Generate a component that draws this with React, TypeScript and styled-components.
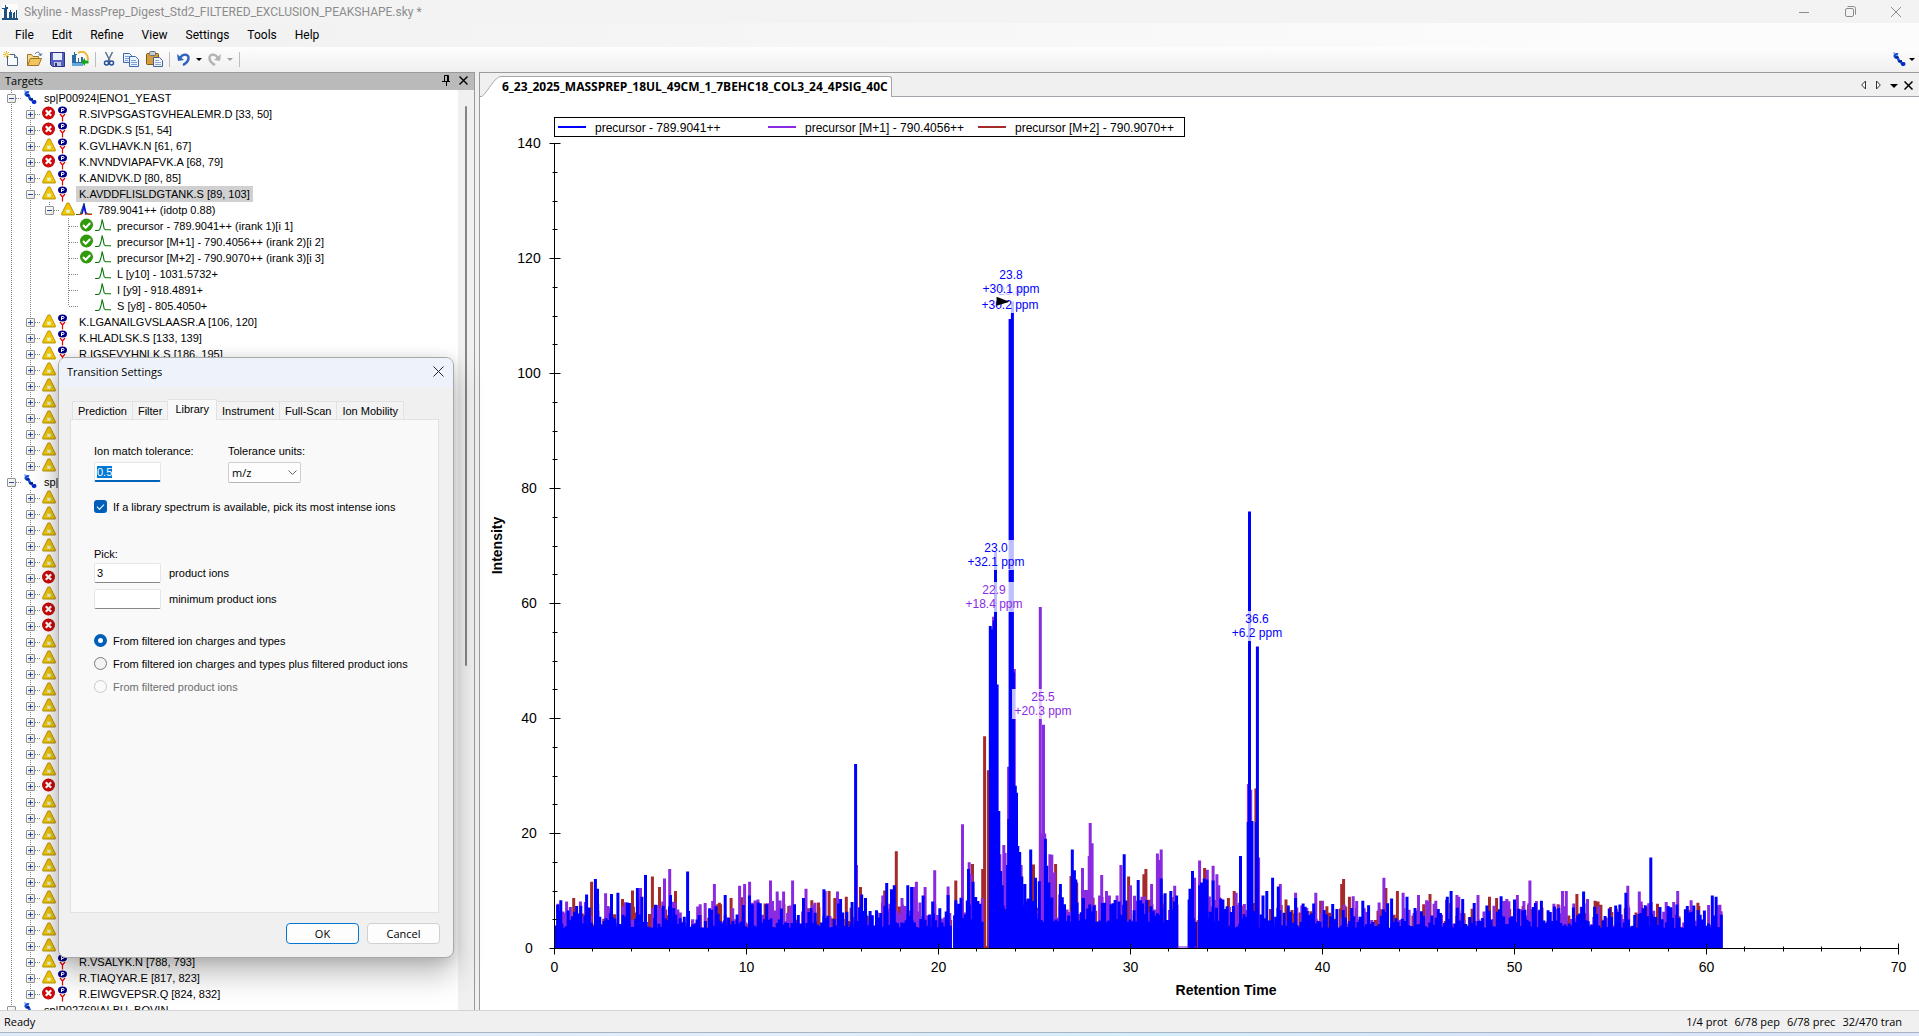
import React, { useEffect, useLayoutEffect, useMemo, useRef, useState } from "react";
import styled, { createGlobalStyle, css } from "styled-components";

const UI = `"Open Sans", "Noto Sans", sans-serif`;
const COMPACT = `Roboto, "Liberation Sans", sans-serif`;
const SANS = `"Liberation Sans", Arial, sans-serif`;

const Global = createGlobalStyle`
  html, body { margin: 0; padding: 0; }
  body { font-family: ${SANS}; font-size: 11px; color: #000; background: #f0f0f0; overflow: hidden; }
  *, *::before, *::after { box-sizing: border-box; }
  button, input, select { font: inherit; color: inherit; }
`;

/* ---------- window frame ---------- */

const Window = styled.div`
  display: flex;
  flex-direction: column;
  height: 100vh;
`;

const TitleBar = styled.header`
  display: flex;
  align-items: center;
  height: 23px;
  padding-left: 2px;
  background: #f3f3f3;
  color: #8c8c8c;
  font-family: ${COMPACT};
  font-size: 12px;
`;

const TitleText = styled.span`
  flex: 1;
  padding-left: 6px;
`;

const CaptionButton = styled.button`
  width: 46px;
  height: 20px;
  padding: 0;
  border: 0;
  background: none;
  display: grid;
  place-items: center;
`;

const MenuBar = styled.nav`
  display: flex;
  height: 24px;
  padding-left: 6px;
  background: linear-gradient(to right, #f0f0f0, #fcfcfc 85%);
  font-family: ${COMPACT};
  font-size: 12px;
`;

const MenuItem = styled.button`
  padding: 0 9px;
  border: 0;
  background: none;
`;

const ToolBar = styled.div`
  display: flex;
  align-items: center;
  height: 25px;
  padding: 0 3px 1px 0;
  background: linear-gradient(#fdfdfd, #f0f0f0);
`;

const ToolButton = styled.button<{ $w?: number }>`
  display: grid;
  place-items: center;
  width: ${(p) => p.$w ?? 23}px;
  height: 22px;
  padding: 0;
  border: 0;
  background: none;
`;

const ToolDivider = styled.span`
  width: 1px;
  height: 15px;
  margin: 0 3px;
  background: #bdbdbd;
`;

const Spacer = styled.span`
  flex: 1;
`;

const Main = styled.main`
  display: flex;
  flex: 1;
  min-height: 0;
  gap: 4px;
`;

const StatusBar = styled.footer`
  display: flex;
  justify-content: space-between;
  align-items: center;
  height: 22px;
  padding: 0 17px 0 4px;
  border-top: 1px solid #d4d4d4;
  background: #f0f0f0;
  font-family: ${UI};
  font-size: 11px;
`;

const StatusCounts = styled.div`
  display: flex;
  gap: 7px;
`;

const DesktopEdge = styled.div`
  height: 4px;
  border-top: 1px solid #a6b4c4;
  background: linear-gradient(to right, #dfeaf8, #e3ecfa 40%, #d2eefa 60%, #d8e2fb 80%, #dfe6fa);
`;

/* ---------- targets panel ---------- */

const TargetsPanel = styled.section`
  display: flex;
  flex-direction: column;
  flex: 0 0 475px;
  min-width: 0;
  border-top: 1px solid #9a9a9a;
  border-right: 1px solid #9a9a9a;
`;

const PanelHeader = styled.div`
  display: flex;
  align-items: center;
  height: 17px;
  padding: 0 2px 2px 5px;
  background: #bababa;
  font-family: ${UI};
  font-size: 11px;
`;

const HeaderButton = styled.button`
  display: grid;
  place-items: center;
  width: 17px;
  height: 15px;
  padding: 0;
  border: 0;
  background: none;
`;

const PanelBody = styled.div`
  display: flex;
  flex: 1;
  min-height: 0;
  background: #fff;
`;

const Tree = styled.ul`
  flex: 1;
  margin: 0;
  padding: 0 0 0 2px;
  list-style: none;
  overflow: hidden;
`;

const TreeRow = styled.li`
  display: flex;
  align-items: center;
  height: 16px;
  white-space: nowrap;
`;

type GuideKind = "none" | "line" | "branch" | "end";

const dotsDown = "repeating-linear-gradient(to bottom, #808080 0 1px, transparent 1px 2px)";
const dotsAcross = "repeating-linear-gradient(to right, #808080 0 1px, transparent 1px 2px)";

const Guide = styled.span<{ $kind: GuideKind }>`
  display: grid;
  place-items: center;
  flex: 0 0 19px;
  height: 16px;
  ${(p) => p.$kind === "line" && css`background: ${dotsDown} 9px 0 / 1px 100% no-repeat;`}
  ${(p) =>
    p.$kind === "branch" &&
    css`background: ${dotsDown} 9px 0 / 1px 100% no-repeat, ${dotsAcross} 10px 8px / 9px 1px no-repeat;`}
  ${(p) =>
    p.$kind === "end" &&
    css`background: ${dotsDown} 9px 0 / 1px 50% no-repeat, ${dotsAcross} 10px 8px / 9px 1px no-repeat;`}
`;

const Expander = styled.button`
  display: grid;
  place-items: center;
  width: 9px;
  height: 9px;
  padding: 0;
  border: 1px solid #919191;
  border-radius: 1px;
  background: linear-gradient(135deg, #fff, #e4e4e4);
`;

const StateSlot = styled.span`
  flex: 0 0 15px;
  height: 16px;
  margin-left: 2px;
`;

const TypeSlot = styled.span`
  flex: 0 0 17px;
  height: 16px;
`;

const RootSlot = styled.span`
  flex: 0 0 16px;
  height: 16px;
  margin-left: 2px;
`;

const RowLabel = styled.span<{ $selected?: boolean }>`
  height: 16px;
  margin-left: 2px;
  padding: 0 3px;
  line-height: 16px;
  background: ${(p) => (p.$selected ? "#d0d0d0" : "transparent")};
`;

const ScrollTrack = styled.div`
  width: 16px;
  padding: 16px 0 0 7px;
  background: #f0f0f0;
`;

const ScrollThumb = styled.div`
  width: 2px;
  height: 62%;
  border-radius: 1px;
  background: #858585;
`;

/* ---------- chart panel ---------- */

const ChartPanel = styled.section`
  display: flex;
  flex-direction: column;
  flex: 1;
  min-width: 0;
  border-top: 1px solid #9a9a9a;
  border-left: 1px solid #9a9a9a;
`;

const TabStrip = styled.div`
  display: flex;
  align-items: flex-end;
  height: 24px;
  padding: 0 3px 0 2px;
  border-bottom: 1px solid #a5a5ad;
  background: #f0f0f0;
`;

const DocTab = styled.button`
  display: flex;
  height: 21px;
  margin-bottom: -1px;
  padding: 0;
  border: 0;
  background: none;
  font-family: ${UI};
  font-size: 12px;
  font-weight: 700;
`;

const DocTabLabel = styled.span`
  height: 21px;
  padding: 0 3px 0 0;
  line-height: 20px;
  border: solid #a5a5ad;
  border-width: 1px 1px 0 0;
  border-radius: 0 3px 0 0;
  background: #fff;
`;

const StripButton = styled.button`
  display: grid;
  place-items: center;
  width: 15px;
  height: 22px;
  padding: 0;
  border: 0;
  background: none;
`;

const ChartArea = styled.div`
  flex: 1;
  min-height: 0;
  background: #fff;
  overflow: hidden;
`;

const ChartSvg = styled.svg`
  display: block;
  font-family: ${SANS};
`;

/* ---------- dialog ---------- */

const Dialog = styled.form`
  position: absolute;
  left: 58px;
  top: 357px;
  width: 396px;
  height: 601px;
  display: flex;
  flex-direction: column;
  border: 1px solid #a8a8a8;
  border-radius: 8px;
  background: #f0f0f0;
  box-shadow: 0 16px 30px rgba(0, 0, 0, 0.26), 0 2px 14px rgba(0, 0, 0, 0.14);
  overflow: hidden;
`;

const DialogTitle = styled.div`
  display: flex;
  align-items: center;
  justify-content: space-between;
  flex: 0 0 29px;
  padding: 0 2px 2px 8px;
  background: #eef3fb;
  font-family: ${UI};
  font-size: 11px;
`;

const CloseButton = styled.button`
  display: grid;
  place-items: center;
  width: 26px;
  height: 26px;
  padding: 0;
  border: 0;
  background: none;
`;

const Tabs = styled.div`
  display: flex;
  align-items: flex-end;
  padding: 12px 0 0 13px;
`;

const DialogTab = styled.button<{ $active?: boolean }>`
  position: relative;
  height: ${(p) => (p.$active ? 21 : 18)}px;
  margin-bottom: ${(p) => (p.$active ? -1 : 0)}px;
  padding: ${(p) => (p.$active ? "0 7px 3px" : "0 5px")};
  border: solid #e2e2e2;
  border-width: 1px 1px 0 0;
  background: ${(p) => (p.$active ? "#f9f9f9" : "#f3f3f3")};
  white-space: nowrap;
  &:first-child { border-left-width: 1px; }
`;

const TabPage = styled.div`
  flex: 1;
  display: flex;
  flex-direction: column;
  margin: 0 14px 0 11px;
  padding: 23px;
  border: 1px solid #e2e2e2;
  background: #f9f9f9;
`;

const FieldRow = styled.div`
  display: flex;
  gap: 67px;
`;

const Field = styled.div`
  display: flex;
  flex-direction: column;
  gap: 3px;
  width: 67px;
  & > label { height: 16px; line-height: 16px; white-space: nowrap; }
`;

const TextBox = styled.input<{ $active?: boolean }>`
  width: 67px;
  height: 20px;
  padding: 0 2px;
  border: 1px solid #e6e6e6;
  border-bottom: ${(p) => (p.$active ? "2px solid #0063b9" : "1px solid #868686")};
  border-radius: 2px;
  outline: none;
  background: #fff;
  &::selection { background: #0078d7; color: #fff; }
`;

const SelectWrap = styled.div`
  position: relative;
  display: flex;
  width: 73px;
`;

const SelectBox = styled.select`
  appearance: none;
  width: 73px;
  height: 21px;
  padding: 0 3px;
  border: 1px solid #cfcfcf;
  border-bottom-color: #b5b5b5;
  border-radius: 2px;
  background: #fdfdfd;
  font-family: ${UI};
`;

const SelectChevron = styled.svg`
  position: absolute;
  right: 4px;
  top: 8px;
  pointer-events: none;
`;

const Choice = styled.label<{ $disabled?: boolean }>`
  display: flex;
  align-items: center;
  gap: 6px;
  height: 23px;
  color: ${(p) => (p.$disabled ? "#6d6d6d" : "#000")};
  white-space: nowrap;
`;

const CheckBox = styled.input`
  appearance: none;
  width: 13px;
  height: 13px;
  margin: 0;
  border-radius: 3px;
  background: #005fb8;
  display: grid;
  place-items: center;
  &::after {
    content: "";
    width: 7px;
    height: 4px;
    margin-top: -2px;
    border: solid #fff;
    border-width: 0 0 1px 1px;
    rotate: -45deg;
  }
`;

const Radio = styled.input`
  appearance: none;
  width: 13px;
  height: 13px;
  margin: 0;
  border: 1px solid #7a7a7a;
  border-radius: 50%;
  background: #f3f3f3;
  &:checked { border: 4px solid #005fb8; background: #fff; }
  &:disabled { border-color: #cacaca; background: #fafafa; }
`;

const Section = styled.div<{ $top: number }>`
  display: flex;
  flex-direction: column;
  margin-top: ${(p) => p.$top}px;
`;

const CountRow = styled.div`
  display: flex;
  align-items: center;
  gap: 8px;
  height: 26px;
`;

const DialogButtons = styled.div`
  display: flex;
  justify-content: flex-end;
  gap: 8px;
  padding: 10px 13px 13px;
`;

const PushButton = styled.button<{ $primary?: boolean }>`
  width: 73px;
  height: 21px;
  padding: 0;
  border: 1px solid ${(p) => (p.$primary ? "#0078d4" : "#d0d0d0")};
  border-radius: 4px;
  background: #fdfdfd;
  font-family: ${UI};
`;

/* ---------- icons ---------- */

const SkylineLogo = () => (
  <svg width="16" height="16" viewBox="0 0 16 16" fill="#1f5082">
    <rect y="0" width="16" height="16" fill="#fff" opacity=".7" />
    <path d="M3 1h1v2h2v2H5v9H2V5H0V4h3zM7 8h1V6h1v2h1v6H7zM11 9h1V8h1v6h-2zM14 6h1v8h-1zM0 14h16v2H0z" />
  </svg>
);

const NewIcon = () => (
  <svg width="16" height="16" viewBox="0 0 16 16">
    <path d="M4.500 3.500h7l3 3v8h-10z" fill="#f8fbff" stroke="#50627c" />
    <path d="M11.500 3.500v3h3" fill="#cfdcec" stroke="#50627c" />
    <path d="M3.500 0v7M0 3.500h7M1 1l5 5M6 1L1 6" stroke="#e8b820" />
    <rect x="2.500" y="2.500" width="2" height="2" fill="#fff6c0" />
  </svg>
);
const OpenIcon = () => (
  <svg width="17" height="16" viewBox="0 0 17 16">
    <path d="M1.500 14V3.500h4l1.500 2h5.500V8" fill="#f6d98a" stroke="#9b762a" />
    <path d="M1.500 14.500L4.500 7.500h11l-3 7z" fill="#f3c35c" stroke="#9b762a" />
    <path d="M9 3c2-3 5-2 5.500 1M12.500 3l2 2 1.500-2.500" fill="none" stroke="#4b6e96" />
  </svg>
);
const SaveIcon = () => (
  <svg width="15" height="15" viewBox="0 0 15 15">
    <path d="M.5.500h14v14h-12l-2-2z" fill="#5560c0" stroke="#2c3488" />
    <rect x="3" y="1" width="9" height="7" fill="#e9effa" />
    <rect x="4" y="10" width="7" height="4" fill="#bcc3dc" />
    <rect x="5" y="11" width="2" height="3" fill="#2c3488" />
  </svg>
);
const PublishIcon = () => (
  <svg width="17" height="16" viewBox="0 0 17 16">
    <path d="M6 2c5-3 10 0 10 7" fill="none" stroke="#f1b52e" strokeWidth="2" />
    <path d="M2 1h1v2h2v1H4v7h2V7h1v4h2V6h2v7H0V4h2z" fill="#2c6aa5" />
    <path d="M0 12h11v3H0z" fill="#64a7da" />
    <path d="M9 11l4-4v2.500h3.500v3H13V15z" fill="#16a316" />
  </svg>
);
const CutIcon = () => (
  <svg width="12" height="16" viewBox="0 0 12 16" fill="none">
    <path d="M2.500 1l4.500 9M9.500 1L5 10" stroke="#5a6f8c" strokeWidth="1.500" />
    <circle cx="3.500" cy="12" r="2" stroke="#274f9c" strokeWidth="1.500" />
    <circle cx="8.500" cy="12" r="2" stroke="#274f9c" strokeWidth="1.500" />
  </svg>
);
const CopyIcon = () => (
  <svg width="16" height="15" viewBox="0 0 16 15" stroke="#3e66a8">
    <path d="M.5 1.500h6l2 2v7h-8z" fill="#eaf2fd" />
    <path d="M2 4.500h4M2 6.500h5M2 8.500h3" stroke="#7ba0d6" />
    <path d="M6.500 4.500h6l3 3v7h-9z" fill="#eaf2fd" />
    <path d="M8 8.500h5M8 10.500h6M8 12.500h6" stroke="#7ba0d6" />
  </svg>
);
const PasteIcon = () => (
  <svg width="17" height="16" viewBox="0 0 17 16">
    <rect x=".5" y="2.500" width="12" height="11" rx="1" fill="#d69b3a" stroke="#7e5817" />
    <rect x="3.500" y=".5" width="6" height="4" rx="1" fill="#c8ccd4" stroke="#6b6f78" />
    <path d="M7.500 6.500h6l3 3v6h-9z" fill="#eef3fb" stroke="#44638e" />
    <path d="M9 9.500h4M9 11.500h6M9 13.500h6" stroke="#8eabd2" />
  </svg>
);
const UndoIcon = () => (
  <svg width="13" height="14" viewBox="0 0 13 14" fill="none">
    <path d="M3 6c3-5 9-4 8.500.500C11.200 9.500 9 11.500 6 13" stroke="#2f64bd" strokeWidth="2.400" />
    <path d="M0 2l1 7 6-1z" fill="#2f64bd" />
  </svg>
);
const RedoIcon = () => (
  <svg width="13" height="14" viewBox="0 0 13 14" fill="none">
    <path d="M10 6C7 1 1 2 1.500 6.500 1.800 9.500 4 11.500 7 13" stroke="#b4b4b4" strokeWidth="2.400" />
    <path d="M13 2l-1 7-6-1z" fill="#b4b4b4" />
  </svg>
);
const Caret = ({ color = "#000" }: { color?: string }) => (
  <svg width="6" height="3" viewBox="0 0 6 3"><path d="M0 0h6L3 3z" fill={color} /></svg>
);

const ProteinIcon = () => (
  <svg width="14" height="15" viewBox="0 0 14 15" fill="none">
    <path d="M1 1h2" stroke="#5c86e8" />
    <path d="M6 2.500C2.500 1.500 1.500 5 4.500 5.500S5.500 9 8 9.500 9 13 11.500 13" stroke="#1450e0" strokeWidth="2.600" />
    <path d="M3.500 5.500l3-.500M6.500 9.500l3.500-.500M9.500 12.500l3-1.500" stroke="#001a80" strokeWidth="2" />
    <circle cx="11.500" cy="12" r="2" fill="#0a28d0" />
  </svg>
);
const PeptideIcon = () => (
  <svg width="12" height="16" viewBox="0 0 12 16">
    <ellipse cx="5.500" cy="4" rx="4.500" ry="3.500" fill="#00008b" />
    <path d="M4.500 6V2.500h1.500a1 1 0 010 2H4.500" fill="none" stroke="#fff" />
    <path d="M3 8l2.500 3L8 8M5.500 11v4.500" fill="none" stroke="#e60000" strokeWidth="1.200" />
  </svg>
);
const ErrorIcon = () => (
  <svg width="14" height="14" viewBox="0 0 14 14">
    <circle cx="6.500" cy="7" r="6.500" fill="#cc0a0a" />
    <path d="M3.800 4.300l5.400 5.400M9.200 4.300L3.800 9.700" stroke="#fff" strokeWidth="2.200" />
  </svg>
);
const WarnIcon = () => (
  <svg width="14" height="14" viewBox="0 0 14 14">
    <path d="M6 1h2l5.300 10.500v1.500H.7v-1.500z" fill="#f5c400" stroke="#b08c00" strokeWidth=".9" strokeLinejoin="round" />
    <rect x="5" y="7.500" width="4" height="3.500" fill="#eaf6cf" stroke="#d8d23c" strokeWidth=".6" />
  </svg>
);
const OkIcon = () => (
  <svg width="14" height="14" viewBox="0 0 14 14">
    <circle cx="6.500" cy="7" r="6.500" fill="#2f9a0a" />
    <path d="M3 7l2.700 2.700L10.200 5" fill="none" stroke="#fff" strokeWidth="2" />
  </svg>
);
const TransitionIcon = () => (
  <svg width="16" height="14" viewBox="0 0 16 14" fill="none" stroke="#077a07">
    <path d="M0 12.500h3.500c1.500 0 1.800-3 2.500-5 .6-2 1-3 1-6 .8 3 1.500 4 1.700 7 .2 2.500.6 3 1.800 3.200h5.500" strokeWidth="1.100" />
  </svg>
);
const PrecursorIcon = () => (
  <svg width="16" height="14" viewBox="0 0 16 14" fill="none">
    <path d="M0 12.500h4l4-11M8 1l1.500 11h6.500" stroke="#077a07" />
    <path d="M2 12.500h3l2-1.500M9 12.500l2-1 2 1h3" stroke="#e02a10" strokeWidth="1.200" />
    <path d="M5.500 11.500c1.500-1 1.500-5 2.500-8 1 3 1 7 2.500 8" stroke="#0a0af0" strokeWidth="1.600" />
  </svg>
);

/* ---------- tree data ---------- */

type State = "error" | "warn" | "ok" | "blank";
interface Node {
  level: 0 | 1 | 2 | 3;
  label: string;
  state?: State;
  open?: boolean;
  last?: boolean;
  selected?: boolean;
}

const pep = (state: State, label = "", extra: Partial<Node> = {}): Node => ({ level: 1, state, label, ...extra });
const tran = (state: State, label: string, last = false): Node => ({ level: 3, state, label, last });
const run = (codes: string): Node[] => codes.split("").map((c) => pep(c === "x" ? "error" : "warn"));

const nodes: Node[] = [
  { level: 0, label: "sp|P00924|ENO1_YEAST", open: true },
  pep("error", "R.SIVPSGASTGVHEALEMR.D [33, 50]"),
  pep("error", "R.DGDK.S [51, 54]"),
  pep("warn", "K.GVLHAVK.N [61, 67]"),
  pep("error", "K.NVNDVIAPAFVK.A [68, 79]"),
  pep("warn", "K.ANIDVK.D [80, 85]"),
  pep("warn", "K.AVDDFLISLDGTANK.S [89, 103]", { open: true, selected: true }),
  { level: 2, state: "warn", label: "789.9041++ (idotp 0.88)", open: true, last: true },
  tran("ok", "precursor - 789.9041++ (irank 1)[i 1]"),
  tran("ok", "precursor [M+1] - 790.4056++ (irank 2)[i 2]"),
  tran("ok", "precursor [M+2] - 790.9070++ (irank 3)[i 3]"),
  tran("blank", "L [y10] - 1031.5732+"),
  tran("blank", "I [y9] - 918.4891+"),
  tran("blank", "S [y8] - 805.4050+", true),
  pep("warn", "K.LGANAILGVSLAASR.A [106, 120]"),
  pep("warn", "K.HLADLSK.S [133, 139]"),
  pep("warn", "R.IGSEVYHNLK.S [186, 195]"),
  ...run("wwwwww"),
  pep("warn", "", { last: true }),
  { level: 0, label: "sp|", open: true },
  ...run("wwwwwxwxxwwwwwwwwwxwwwwwwwwww"),
  pep("warn", "R.VSALYK.N [788, 793]"),
  pep("warn", "R.TIAQYAR.E [817, 823]"),
  pep("error", "R.EIWGVEPSR.Q [824, 832]", { last: true }),
  { level: 0, label: "sp|P02769|ALBU_BOVIN", open: true },
];

const stateIcons: Record<State, React.ReactNode> = {
  error: <ErrorIcon />,
  warn: <WarnIcon />,
  ok: <OkIcon />,
  blank: null,
};

function guidesFor(n: Node): GuideKind[] {
  const own: GuideKind = n.last ? "end" : "branch";
  if (n.level === 0) return ["branch"];
  if (n.level === 1) return ["line", own];
  if (n.level === 2) return ["line", "line", own];
  return ["line", "line", "none", own];
}

function TreeItem({ node }: { node: Node }) {
  const guides = guidesFor(node);
  const expandable = node.level < 3;
  return (
    <TreeRow>
      {guides.map((g, i) => (
        <Guide key={i} $kind={g}>
          {i === guides.length - 1 && expandable && (
            <Expander type="button" aria-label={node.open ? "Collapse" : "Expand"}>
              <svg width="7" height="7" viewBox="0 0 7 7" stroke="#2b4a9b">
                <path d={node.open ? "M1 3.500h5" : "M1 3.500h5M3.500 1v5"} />
              </svg>
            </Expander>
          )}
        </Guide>
      ))}
      {node.level === 0 ? (
        <RootSlot><ProteinIcon /></RootSlot>
      ) : (
        <>
          <StateSlot>{stateIcons[node.state ?? "blank"]}</StateSlot>
          <TypeSlot>
            {node.level === 1 ? <PeptideIcon /> : node.level === 2 ? <PrecursorIcon /> : <TransitionIcon />}
          </TypeSlot>
        </>
      )}
      <RowLabel $selected={node.selected}>{node.label}</RowLabel>
    </TreeRow>
  );
}

/* ---------- chromatogram ---------- */

type Peak = [number, number];

const bluePeaks: Peak[] = [
  [0.16, 7.6], [0.33, 8.4], [1.67, 9.4], [2.13, 12.1], [2.24, 10.4], [2.97, 9.5], [3.3, 9.7], [4.32, 10.5], [4.55, 9],
  [4.74, 12.8], [5.26, 7.6], [6.04, 9.3], [6.93, 13.4], [8.89, 9.3], [10.15, 9.2], [10.3, 7.7], [12.5, 7.7], [12.97, 8.8],
  [14.03, 10.3], [14.9, 8.6], [15.5, 8.1], [15.68, 32.1], [16, 9.4], [16.2, 8.8], [17.3, 11.4], [17.55, 10.3], [17.7, 11],
  [18.4, 11], [18.6, 10.7], [19.2, 9.2], [19.7, 8.2], [20.5, 9.3], [20.9, 8.4], [21.56, 13.8], [21.8, 11.6],
  [22.7, 56.1], [22.76, 34], [22.83, 55.5], [22.9, 57], [22.97, 69], [23.05, 45.9], [23.14, 23.9], [23.24, 13.5], [23.32, 11],
  [23.6, 14.5], [23.66, 22.5], [23.73, 109.5], [23.79, 109.5], [23.85, 112.5], [23.9, 48], [24, 28.3], [24.06, 27.1],
  [24.13, 17.8], [24.23, 16.8], [24.34, 12.5], [24.5, 11.2], [24.8, 17.2], [25.05, 12.3], [25.25, 11.7], [25.57, 19.1],
  [25.64, 14.4], [25.75, 11.5], [26.35, 11.2], [26.97, 17.2], [27.08, 13.6], [27.15, 12], [27.53, 8.8], [29.4, 8.2],
  [29.67, 16.4], [30.4, 11.9], [31.6, 12.2], [31.8, 9.6], [32.1, 10], [32.4, 9.2], [33.1, 10.4], [33.23, 13.5], [33.6, 11],
  [33.7, 11.5], [33.84, 12.2], [33.98, 12], [34.3, 11.8], [34.7, 8.7], [35.73, 16.1], [36.13, 22], [36.2, 76], [36.33, 22.2],
  [36.55, 22], [36.61, 52.5], [36.9, 9.2], [37.1, 10], [37.4, 12.3], [37.7, 10.8], [38.6, 8.8], [39, 7.2], [42.1, 8.3],
  [43.6, 8.7], [44.4, 9], [46.5, 9], [46.7, 10], [47.3, 8.6], [49.3, 9.1], [50, 8.5], [51.4, 8.3], [53.6, 9.9], [55.8, 9.7],
  [57.1, 15.8], [58, 7.4], [59, 7.4], [60.3, 9.2], [60.5, 9],
];

const purplePeaks: Peak[] = [
  [0.63, 8.2], [2.66, 9.6], [4.48, 10.5], [5.73, 12.2], [6, 13.8], [8.33, 11.2], [9.64, 10.9], [9.9, 11.2], [10.16, 11.6],
  [10.6, 8.5], [11.25, 11.8], [11.6, 9.9], [11.93, 9.9], [12.4, 11.8], [13.1, 10.4], [14.1, 10], [14.74, 9.9], [15.73, 14.5],
  [17.1, 9.2], [18.1, 8.8], [18.75, 10.7], [18.85, 11.6], [19.3, 10.7], [19.8, 13.6], [20.5, 10.8], [21.25, 21.6],
  [21.6, 15], [21.7, 13], [22.87, 57.7], [23.2, 16.4], [23.4, 18], [23.47, 16.6], [23.65, 31.6], [23.95, 48.6], [24.3, 14.5],
  [25.3, 59.4], [25.36, 20], [25.42, 20], [25.47, 38.9], [25.53, 20], [25.8, 16.4], [25.9, 16.3], [26.03, 13.2], [27.5, 14],
  [27.6, 10.2], [27.72, 10.2], [27.85, 16.1], [27.9, 21.8], [28, 18.3], [28.5, 12.8], [28.75, 10], [28.9, 9.2], [29.5, 14.5],
  [30, 11], [31.1, 11.2], [31.4, 16.5], [31.5, 15.4], [31.6, 17.2], [32.3, 10.9], [33.34, 12.3], [33.6, 15.3], [34, 13.7],
  [34.3, 14.4], [34.5, 12.9], [34.6, 11], [35.5, 9.7], [36.14, 28.6], [36.26, 27.6], [36.67, 15.8], [37.8, 11.2],
  [38.6, 9.7], [39.65, 9.7], [40, 8.3], [41.6, 9.1], [43.2, 12.3], [44.2, 9.7], [45, 9.3], [45.9, 8.3], [47, 9.3], [47.1, 9],
  [48.1, 9.3], [49.6, 8.6], [50.15, 9.3], [50.8, 11.8], [52.5, 10], [52.7, 10], [53.8, 8.6], [55.9, 10.9], [56.5, 9.9],
  [57.9, 8.1], [58.5, 10], [60.7, 7.6],
];

const brownPeaks: Peak[] = [
  [1, 8.8], [1.93, 11.6], [3.54, 8.6], [4.06, 10.1], [5.1, 12.5], [5.47, 10.7], [6.3, 10], [8.5, 7.7], [8.65, 7.7],
  [9.2, 8.8], [9.74, 8.9], [12.2, 7.4], [13.4, 8.4], [13.75, 8], [14.3, 10], [14.6, 8.8], [15.2, 9], [15.94, 10.7],
  [17.2, 10.1], [17.8, 16.9], [20.9, 11.8], [21.77, 14.7], [22.3, 13.8], [22.4, 36.9], [22.6, 31], [24.95, 14.6],
  [26.1, 14.7], [26.9, 12.6], [27.2, 11.5], [29.9, 12.5], [30.7, 12.9], [30.8, 13.8], [33.86, 14], [35.1, 8.8],
  [35.4, 10], [36.53, 27.8], [38.1, 8.5], [39.9, 8.3], [41, 11.2], [41.1, 12.1], [41.4, 9], [43.3, 10.5], [43.9, 10],
  [45.6, 9.5], [48.7, 9], [49.07, 8.8], [53.25, 9.5], [54.2, 8.3], [54.35, 8.2], [54.5, 7.6], [55, 7.2], [59.6, 7.4],
];

const gaps: Peak[] = [[20.7, 20.83], [22.34, 22.66], [32.47, 33.03], [33.38, 33.5]];

function withNoise(peaks: Peak[], seed: number, low: number, spread: number, step: number): Peak[] {
  let s = seed;
  const rand = () => {
    s = (s * 1664525 + 1013904223) % 4294967296;
    return s / 4294967296;
  };
  const out: Peak[] = [...peaks];
  for (let t = 0.05; t < 60.8; t += step) {
    const lift = t > 20.9 && t < 35 ? 1 : 0;
    const h = low + lift + spread * Math.pow(rand(), 1.8);
    if (!gaps.some(([a, b]) => t > a && t < b)) out.push([t, h]);
  }
  return out;
}

interface PeakTag {
  rt: number;
  at: number;
  time: string;
  error: string;
  color: string;
}

const BLUE = "#0000ff";
const PURPLE = "#8a2be2";
const BROWN = "#a52a2a";

const tags: PeakTag[] = [
  { rt: 23.7, at: 113.2, time: "23.8", error: "+30.2 ppm", color: BLUE },
  { rt: 23.8, at: 115.9, time: "23.8", error: "+30.1 ppm", color: BLUE },
  { rt: 22.9, at: 61.2, time: "22.9", error: "+18.4 ppm", color: PURPLE },
  { rt: 22.97, at: 68.4, time: "23.0", error: "+32.1 ppm", color: BLUE },
  { rt: 25.42, at: 42.6, time: "25.5", error: "+20.3 ppm", color: PURPLE },
  { rt: 36.6, at: 56.1, time: "36.6", error: "+6.2 ppm", color: BLUE },
];

const legend = [
  { name: "precursor - 789.9041++", color: BLUE },
  { name: "precursor [M+1] - 790.4056++", color: PURPLE },
  { name: "precursor [M+2] - 790.9070++", color: BROWN },
];

function Chromatogram() {
  const host = useRef<HTMLDivElement>(null);
  const [size, setSize] = useState({ w: 1439, h: 913 });

  useLayoutEffect(() => {
    const el = host.current;
    if (!el) return;
    const measure = () => setSize({ w: el.clientWidth, h: el.clientHeight });
    measure();
    const ro = new ResizeObserver(measure);
    ro.observe(el);
    return () => ro.disconnect();
  }, []);

  const series = useMemo(
    () => [
      { color: BROWN, points: withNoise(brownPeaks, 11, 2.5, 5.5, 0.14) },
      { color: PURPLE, points: withNoise(purplePeaks, 29, 3.4, 5.2, 0.13) },
      { color: BLUE, points: withNoise(bluePeaks, 73, 3.6, 4.4, 0.11) },
    ],
    []
  );

  const left = 74;
  const top = 46;
  const right = size.w - 21;
  const bottom = size.h - 62;
  const px = (t: number) => left + 0.5 + ((right - left) * t) / 70;
  const py = (v: number) => bottom + 0.5 - ((bottom - top) * v) / 140;
  const snap = (n: number) => Math.floor(n) + 0.5;

  const xTicks = Array.from({ length: 36 }, (_, i) => i * 2);
  const yTicks = Array.from({ length: 29 }, (_, i) => i * 5);

  return (
    <ChartArea ref={host}>
      <ChartSvg width={size.w} height={size.h} role="img" aria-label="Chromatogram">
        {series.map((s) => (
          <path
            key={s.color}
            d={s.points.map(([t, v]) => `M${px(t).toFixed(1)} ${bottom}V${py(v).toFixed(1)}`).join("")}
            stroke={s.color}
            strokeWidth="3"
            fill="none"
          />
        ))}
        <path d={`M${px(22.4)} ${bottom - 1}H${px(22.6)}`} stroke={BROWN} strokeWidth="2" />
        <path d={`M${px(32.4)} ${bottom - 1}H${px(33.1)}M${px(33.3)} ${bottom - 1}H${px(33.5)}`} stroke="#5a14f0" />

        <g stroke="#000">
          <path d={`M${px(0)} ${py(140)}V${py(0)}H${px(70)}`} fill="none" />
          {yTicks.map((v) => {
            const r = v % 20 === 0 ? 5 : 2;
            return <path key={v} d={`M${px(0) - r} ${snap(py(v))}h${r * 2 + 1}`} />;
          })}
          {xTicks.map((t) => {
            const r = t % 10 === 0 ? 5 : 2;
            return <path key={t} d={`M${snap(px(t))} ${py(0) - (t > 60 || r === 5 ? r : 0)}V${py(0) + r + 1}`} />;
          })}
        </g>

        <g fontSize="14" textAnchor="middle">
          {yTicks.filter((v) => v % 20 === 0).map((v) => (
            <text key={v} x={left - 25} y={py(v) + 4}>{v}</text>
          ))}
          {xTicks.filter((t) => t % 10 === 0).map((t) => (
            <text key={t} x={px(t)} y={bottom + 24}>{t}</text>
          ))}
          <g fontWeight="700">
            <text x={(left + right) / 2} y={bottom + 47}>Retention Time</text>
            <text transform={`translate(22 ${(top + bottom) / 2}) rotate(-90)`}>Intensity</text>
          </g>
        </g>

        <g fontSize="12" textAnchor="middle">
          {tags.map((t) => (
            <g key={t.error} transform={`translate(${Math.round(px(t.rt))} ${Math.round(py(t.at))})`} fill={t.color}>
              <rect x="-31" y="-15" width="62" height="30" fill="#fff" fillOpacity=".75" />
              <text y="-3">{t.time}</text>
              <text y="11">{t.error}</text>
            </g>
          ))}
        </g>
        <path d={`M${px(23.7) - 13} ${py(112.5) - 5}v9l13-4z`} fill="#000" />

        <g transform={`translate(${left} 20)`}>
          <rect x=".5" y=".5" width="630" height="19" fill="#fff" stroke="#000" />
          {legend.map((l, i) => (
            <g key={l.name} transform={`translate(${i * 210} 0)`}>
              <path d="M4 10h28" stroke={l.color} strokeWidth="2" />
              <text x="41" y="15" fontSize="12">{l.name}</text>
            </g>
          ))}
        </g>
      </ChartSvg>
    </ChartArea>
  );
}

/* ---------- transition settings ---------- */

const dialogTabs = ["Prediction", "Filter", "Library", "Instrument", "Full-Scan", "Ion Mobility"];

function TransitionSettings() {
  const tolerance = useRef<HTMLInputElement>(null);
  useEffect(() => {
    tolerance.current?.focus();
    tolerance.current?.select();
  }, []);

  return (
    <Dialog role="dialog" aria-label="Transition Settings" onSubmit={(e) => e.preventDefault()}>
      <DialogTitle>
        <span>Transition Settings</span>
        <CloseButton type="button" aria-label="Close">
          <svg width="11" height="11" viewBox="0 0 11 11" stroke="#222"><path d="M.5.500l10 10M10.500.500l-10 10" /></svg>
        </CloseButton>
      </DialogTitle>
      <Tabs role="tablist">
        {dialogTabs.map((t) => (
          <DialogTab key={t} type="button" role="tab" $active={t === "Library"} aria-selected={t === "Library"}>
            {t}
          </DialogTab>
        ))}
      </Tabs>
      <TabPage>
        <FieldRow>
          <Field>
            <label htmlFor="tol">Ion match tolerance:</label>
            <TextBox id="tol" ref={tolerance} defaultValue="0.5" $active />
          </Field>
          <Field>
            <label htmlFor="units">Tolerance units:</label>
            <SelectWrap>
              <SelectBox id="units" defaultValue="m/z"><option>m/z</option></SelectBox>
              <SelectChevron width="9" height="6" viewBox="0 0 9 6" fill="none" stroke="#666">
                <path d="M.5.500l4 4 4-4" />
              </SelectChevron>
            </SelectWrap>
          </Field>
        </FieldRow>
        <Section $top={12}>
          <Choice>
            <CheckBox type="checkbox" defaultChecked />
            If a library spectrum is available, pick its most intense ions
          </Choice>
        </Section>
        <Section $top={30}>
          <label htmlFor="pick">Pick:</label>
          <CountRow>
            <TextBox id="pick" defaultValue="3" />
            <label htmlFor="pick">product ions</label>
          </CountRow>
          <CountRow>
            <TextBox id="minimum" defaultValue="" />
            <label htmlFor="minimum">minimum product ions</label>
          </CountRow>
        </Section>
        <Section $top={17}>
          <Choice><Radio type="radio" name="source" defaultChecked />From filtered ion charges and types</Choice>
          <Choice><Radio type="radio" name="source" />From filtered ion charges and types plus filtered product ions</Choice>
          <Choice $disabled><Radio type="radio" name="source" disabled />From filtered product ions</Choice>
        </Section>
      </TabPage>
      <DialogButtons>
        <PushButton type="submit" $primary>OK</PushButton>
        <PushButton type="button">Cancel</PushButton>
      </DialogButtons>
    </Dialog>
  );
}

/* ---------- page ---------- */

export default function App() {
  return (
    <Window>
      <Global />
      <TitleBar>
        <SkylineLogo />
        <TitleText>Skyline - MassPrep_Digest_Std2_FILTERED_EXCLUSION_PEAKSHAPE.sky *</TitleText>
        <CaptionButton aria-label="Minimize">
          <svg width="10" height="10" viewBox="0 0 10 10" stroke="#8c8c8c"><path d="M0 5.500h10" /></svg>
        </CaptionButton>
        <CaptionButton aria-label="Restore">
          <svg width="11" height="11" viewBox="0 0 11 11" fill="none" stroke="#8c8c8c">
            <rect x=".5" y="2.500" width="8" height="8" rx="1.500" />
            <path d="M2.500.500h6a2 2 0 012 2v6" />
          </svg>
        </CaptionButton>
        <CaptionButton aria-label="Close">
          <svg width="10" height="10" viewBox="0 0 10 10" stroke="#8c8c8c"><path d="M0 0l10 10M10 0L0 10" /></svg>
        </CaptionButton>
      </TitleBar>
      <MenuBar>
        {["File", "Edit", "Refine", "View", "Settings", "Tools", "Help"].map((m) => (
          <MenuItem key={m}>{m}</MenuItem>
        ))}
      </MenuBar>
      <ToolBar>
        <ToolButton $w={22} aria-label="New"><NewIcon /></ToolButton>
        <ToolButton $w={24} aria-label="Open"><OpenIcon /></ToolButton>
        <ToolButton aria-label="Save"><SaveIcon /></ToolButton>
        <ToolButton aria-label="Publish"><PublishIcon /></ToolButton>
        <ToolDivider />
        <ToolButton $w={20} aria-label="Cut"><CutIcon /></ToolButton>
        <ToolButton $w={24} aria-label="Copy"><CopyIcon /></ToolButton>
        <ToolButton aria-label="Paste"><PasteIcon /></ToolButton>
        <ToolDivider />
        <ToolButton $w={20} aria-label="Undo"><UndoIcon /></ToolButton>
        <ToolButton $w={11} aria-label="Undo list"><Caret /></ToolButton>
        <ToolButton $w={20} aria-label="Redo" disabled><RedoIcon /></ToolButton>
        <ToolButton $w={12} aria-label="Redo list" disabled><Caret color="#a0a0a0" /></ToolButton>
        <ToolDivider />
        <Spacer />
        <ToolButton $w={16} aria-label="Document type"><ProteinIcon /></ToolButton>
        <ToolButton $w={9} aria-label="Document type list"><Caret /></ToolButton>
      </ToolBar>

      <Main>
        <TargetsPanel>
          <PanelHeader>
            <span>Targets</span>
            <Spacer />
            <HeaderButton aria-label="Auto hide">
              <svg width="9" height="11" viewBox="0 0 9 11" fill="none" stroke="#000">
                <path d="M2.500 6V.500h4V6M5.500 1v5M0 6.500h8M4.500 7v4" />
              </svg>
            </HeaderButton>
            <HeaderButton aria-label="Close panel">
              <svg width="9" height="9" viewBox="0 0 9 9" stroke="#000" strokeWidth="1.400"><path d="M.5.500l8 8M8.500.500l-8 8" /></svg>
            </HeaderButton>
          </PanelHeader>
          <PanelBody>
            <Tree>
              {nodes.map((n, i) => <TreeItem key={i} node={n} />)}
            </Tree>
            <ScrollTrack><ScrollThumb /></ScrollTrack>
          </PanelBody>
        </TargetsPanel>

        <ChartPanel>
          <TabStrip>
            <DocTab>
              <svg width="20" height="21" viewBox="0 0 20 21">
                <path d="M0 21L.5 20C6 15 13 .500 19 .500h1V21z" fill="#fff" />
                <path d="M.5 20C6 15 13 .500 19 .500h1" fill="none" stroke="#a5a5ad" />
              </svg>
              <DocTabLabel>6_23_2025_MASSPREP_18UL_49CM_1_7BEHC18_COL3_24_4PSIG_40C</DocTabLabel>
            </DocTab>
            <Spacer />
            <StripButton aria-label="Previous">
              <svg width="5" height="10" viewBox="0 0 5 10" fill="#fff" stroke="#333"><path d="M4.500 1v8L.7 5z" /></svg>
            </StripButton>
            <StripButton aria-label="Next">
              <svg width="5" height="10" viewBox="0 0 5 10" fill="#fff" stroke="#333"><path d="M.5 1v8l3.800-4z" /></svg>
            </StripButton>
            <StripButton aria-label="Window list">
              <svg width="8" height="8" viewBox="0 0 8 8"><path d="M0 3h8L4 7z" /></svg>
            </StripButton>
            <StripButton aria-label="Close tab">
              <svg width="9" height="9" viewBox="0 0 9 9" stroke="#000" strokeWidth="1.500"><path d="M.5.500l8 8M8.500.500l-8 8" /></svg>
            </StripButton>
          </TabStrip>
          <Chromatogram />
        </ChartPanel>
      </Main>

      <StatusBar>
        <span>Ready</span>
        <StatusCounts>
          <span>1/4 prot</span><span>6/78 pep</span><span>6/78 prec</span><span>32/470 tran</span>
        </StatusCounts>
      </StatusBar>
      <DesktopEdge />
      <TransitionSettings />
    </Window>
  );
}
